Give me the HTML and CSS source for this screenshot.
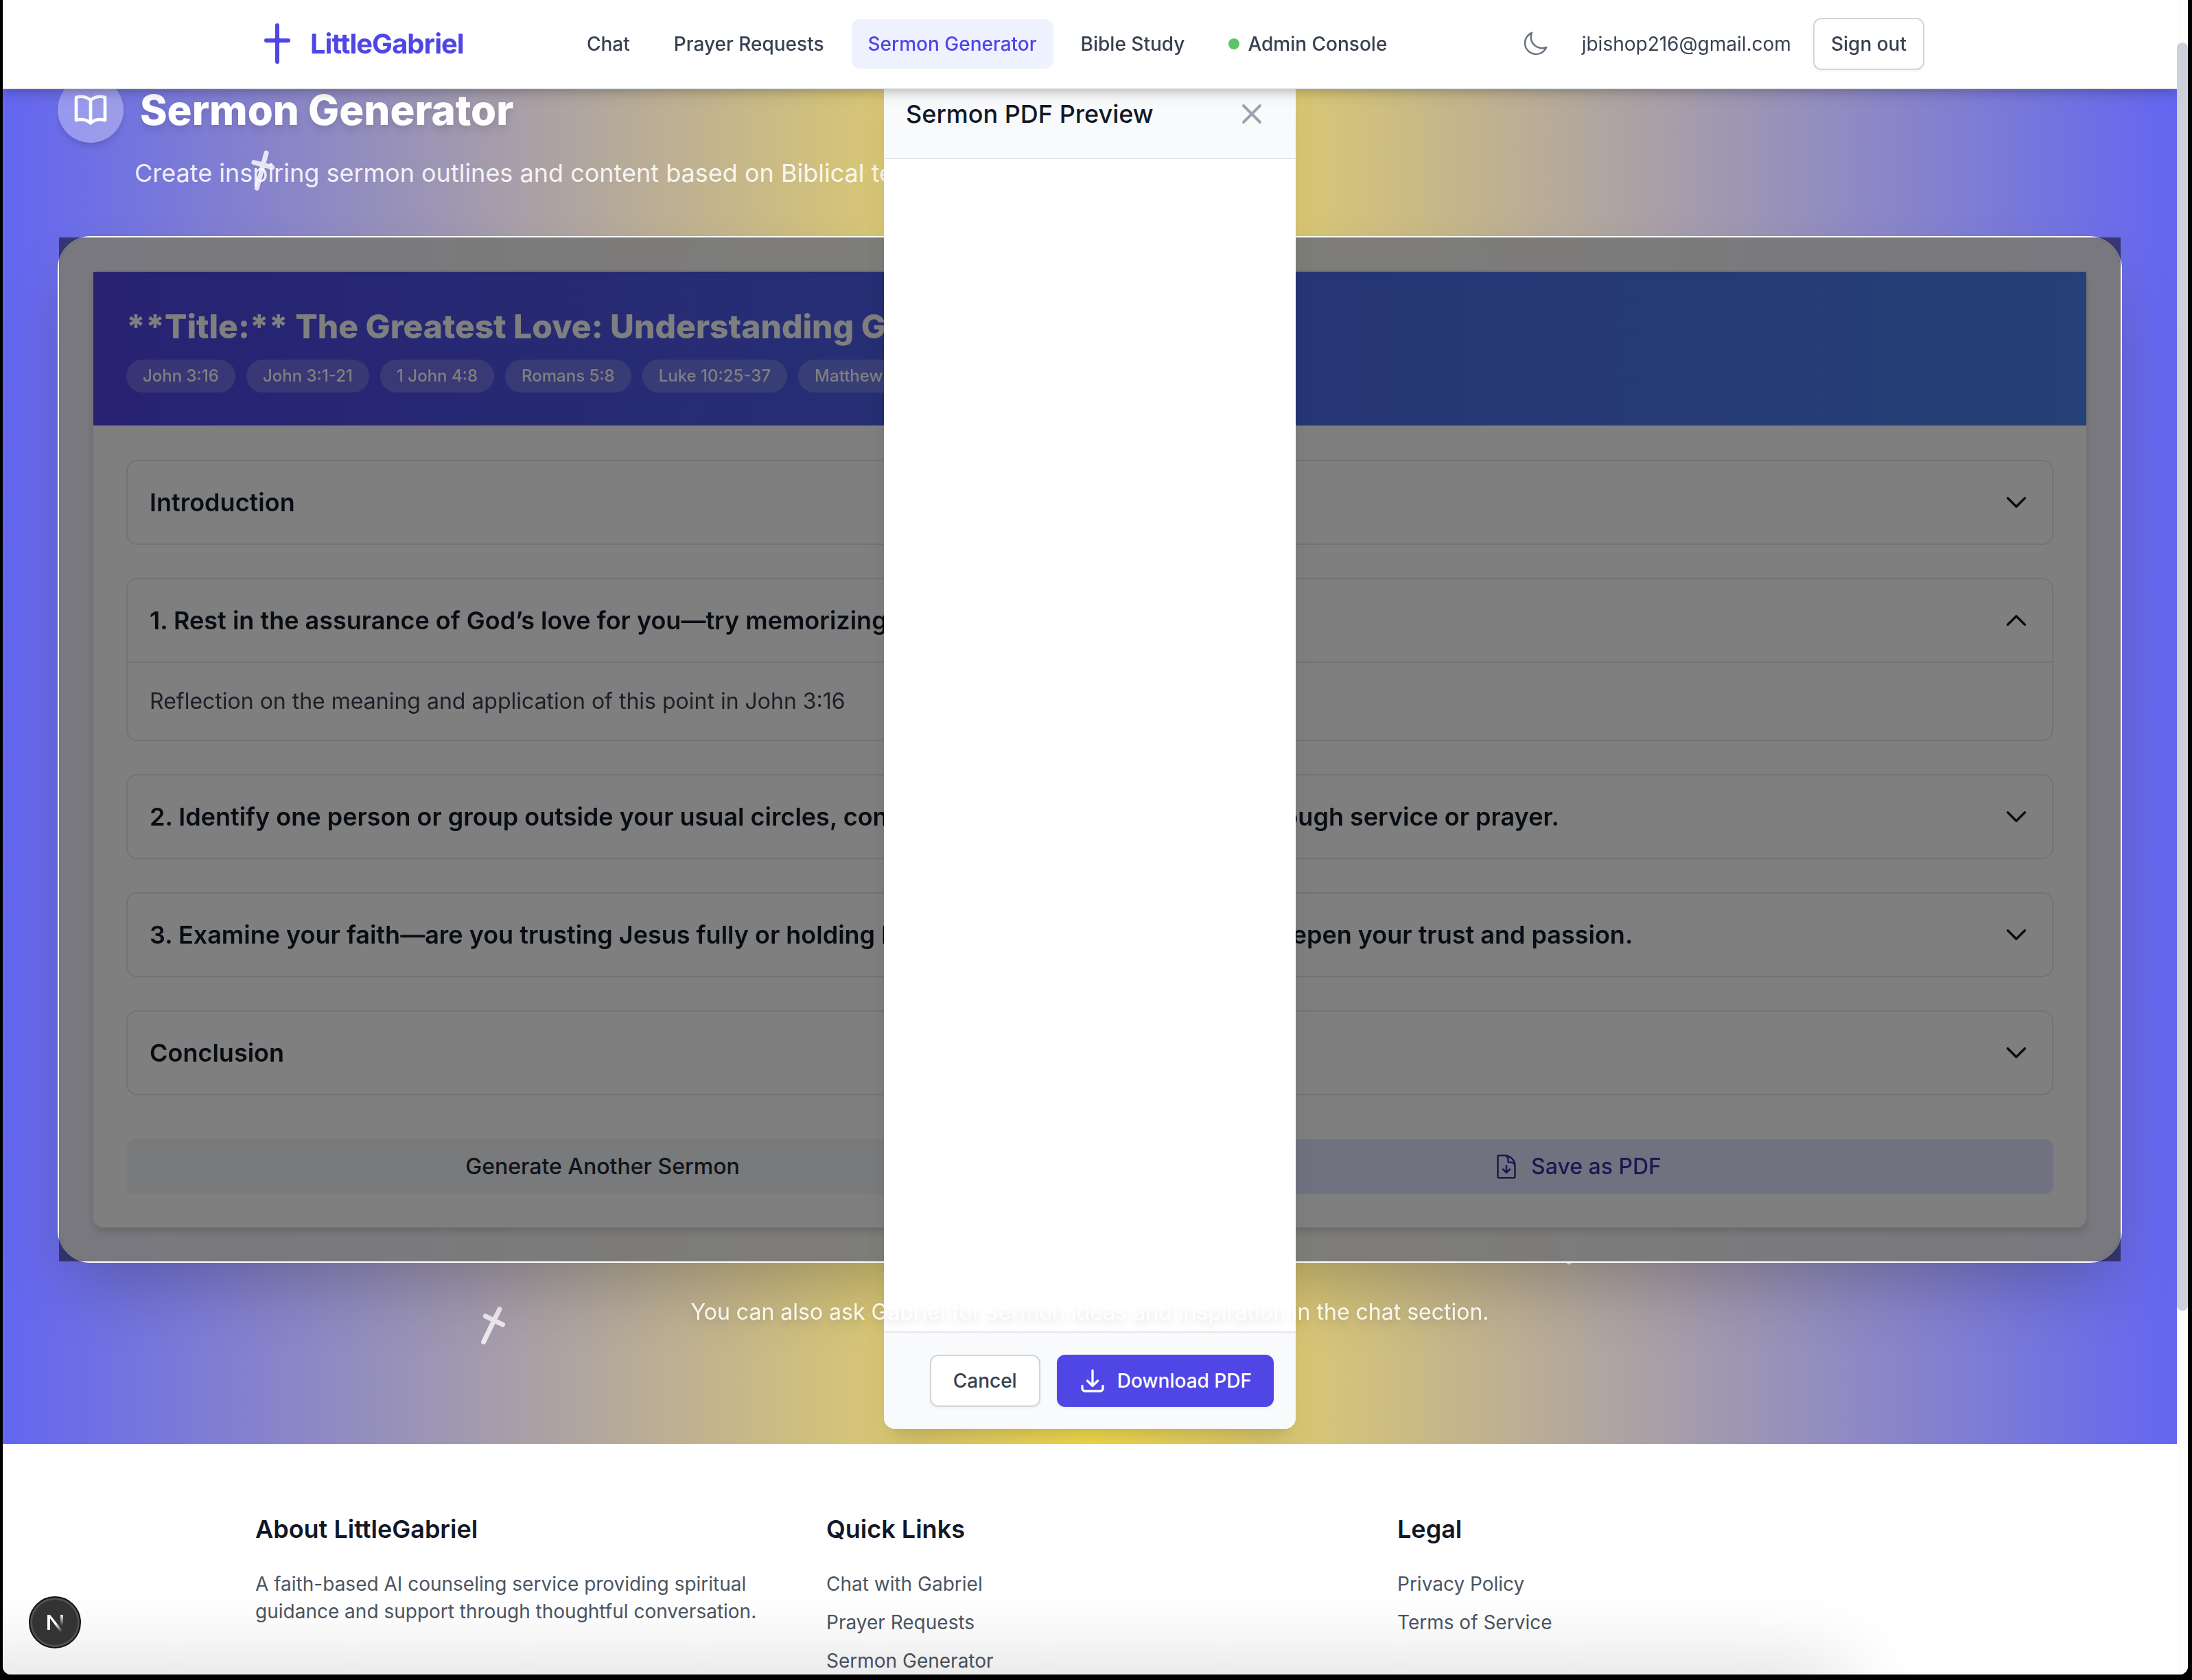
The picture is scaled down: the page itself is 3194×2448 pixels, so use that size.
FILE: index.html
```html
<!DOCTYPE html>
<html lang="en">
<head>
<meta charset="utf-8">
<title>Sermon Generator - LittleGabriel</title>
<link rel="stylesheet" href="styles.css">
</head>
<body>
<svg width="0" height="0" class="defs" aria-hidden="true">
  <symbol id="chevron-down" viewBox="0 0 24 24"><path d="M19.5 8.25l-7.5 7.5-7.5-7.5"/></symbol>
  <symbol id="chevron-up" viewBox="0 0 24 24"><path d="M4.5 15.75l7.5-7.5 7.5 7.5"/></symbol>
  <symbol id="cross" viewBox="0 0 64 64"><path d="M32 5v53M18 23h28"/></symbol>
</svg>
<div class="window">
  <div class="viewport">
    <header class="header">
      <div class="header-inner">
        <a class="brand" href="#">
          <svg class="brand-icon" viewBox="0 0 64 64" aria-hidden="true"><path d="M32 5v53M16 27h32"/><circle cx="32" cy="27" r="2"/></svg>
          <span class="brand-name">LittleGabriel</span>
        </a>
        <nav class="nav">
          <a class="nav-link" href="#">Chat</a>
          <a class="nav-link" href="#">Prayer Requests</a>
          <a class="nav-link is-active" href="#">Sermon Generator</a>
          <a class="nav-link" href="#">Bible Study</a>
          <a class="nav-link" href="#"><span class="status-dot"></span>Admin Console</a>
        </nav>
        <div class="account">
          <button class="theme-toggle" type="button" aria-label="Toggle theme">
            <svg class="icon thin" viewBox="0 0 24 24"><path d="M21.752 15.002A9.718 9.718 0 0118 15.75c-5.385 0-9.75-4.365-9.75-9.75 0-1.33.266-2.597.748-3.752A9.753 9.753 0 003 11.25C3 16.635 7.365 21 12.75 21a9.753 9.753 0 009.002-5.998z"/></svg>
          </button>
          <span class="email">jbishop216@gmail.com</span>
          <button class="btn btn-outline btn-compact" type="button">Sign out</button>
        </div>
      </div>
    </header>

    <main class="main">
      <svg class="float-cross cross-a" aria-hidden="true"><use href="#cross"/></svg>
      <svg class="float-cross cross-b" aria-hidden="true"><use href="#cross"/></svg>
      <svg class="float-cross cross-c" aria-hidden="true"><use href="#cross"/></svg>

      <div class="hero">
        <span class="hero-icon">
          <svg viewBox="0 0 24 24" aria-hidden="true"><path d="M12 6.042A8.967 8.967 0 006 3.75c-1.052 0-2.062.18-3 .512v14.25A8.987 8.987 0 016 18c2.305 0 4.408.867 6 2.292m0-14.25a8.966 8.966 0 016-2.292c1.052 0 2.062.18 3 .512v14.25A8.987 8.987 0 0018 18a8.967 8.967 0 00-6 2.292m0-14.25v14.25"/></svg>
        </span>
        <h1 class="hero-title">Sermon Generator</h1>
      </div>
      <p class="hero-sub">Create inspiring sermon outlines and content based on Biblical teachings</p>

      <div class="panel">
        <article class="sermon">
          <header class="sermon-head">
            <h2 class="sermon-title">**Title:** The Greatest Love: Understanding God’s Love in John 3:16</h2>
            <ul class="refs">
              <li class="ref">John 3:16</li>
              <li class="ref">John 3:1-21</li>
              <li class="ref">1 John 4:8</li>
              <li class="ref">Romans 5:8</li>
              <li class="ref">Luke 10:25-37</li>
              <li class="ref">Matthew 22:37</li>
            </ul>
          </header>
          <div class="sermon-body">
            <section class="section">
              <button class="section-toggle" type="button" aria-expanded="false">Introduction<svg class="icon"><use href="#chevron-down"/></svg></button>
            </section>
            <section class="section">
              <button class="section-toggle" type="button" aria-expanded="true">1. Rest in the assurance of God’s love for you—try memorizing John 3:16.<svg class="icon"><use href="#chevron-up"/></svg></button>
              <p class="section-text">Reflection on the meaning and application of this point in John 3:16</p>
            </section>
            <section class="section">
              <button class="section-toggle" type="button" aria-expanded="false">2. Identify one person or group outside your usual circles, consider how you may share care through service or prayer.<svg class="icon"><use href="#chevron-down"/></svg></button>
            </section>
            <section class="section">
              <button class="section-toggle" type="button" aria-expanded="false">3. Examine your faith—are you trusting Jesus fully or holding back? Look to God every day to deepen your trust and passion.<svg class="icon"><use href="#chevron-down"/></svg></button>
            </section>
            <section class="section">
              <button class="section-toggle" type="button" aria-expanded="false">Conclusion<svg class="icon"><use href="#chevron-down"/></svg></button>
            </section>
            <div class="actions">
              <button class="action" type="button">Generate Another Sermon</button>
              <button class="action action-pdf" type="button"><svg class="icon thin" viewBox="0 0 24 24"><path d="M19.5 14.25v-2.625a3.375 3.375 0 00-3.375-3.375h-1.5A1.125 1.125 0 0113.5 7.125v-1.5a3.375 3.375 0 00-3.375-3.375H8.25m.75 12l3 3m0 0l3-3m-3 3v-6m-1.5-9H5.625c-.621 0-1.125.504-1.125 1.125v17.25c0 .621.504 1.125 1.125 1.125h12.75c.621 0 1.125-.504 1.125-1.125V11.25a9 9 0 00-9-9z"/></svg>Save as PDF</button>
            </div>
          </div>
        </article>

        <div class="overlay">
          <div class="modal" role="dialog" aria-labelledby="modal-title">
            <div class="modal-head">
              <h3 class="modal-title" id="modal-title">Sermon PDF Preview</h3>
              <button class="modal-close" type="button" aria-label="Close"><svg viewBox="0 0 24 24"><path d="M6 18L18 6M6 6l12 12"/></svg></button>
            </div>
            <div class="modal-body"></div>
            <div class="modal-foot">
              <button class="btn btn-outline" type="button">Cancel</button>
              <button class="btn btn-primary" type="button"><svg class="icon" viewBox="0 0 24 24"><path d="M3 16.5v2.25A2.25 2.25 0 005.25 21h13.5A2.25 2.25 0 0021 18.75V16.5M16.5 12L12 16.5m0 0L7.5 12m4.5 4.5V3"/></svg>Download PDF</button>
            </div>
          </div>
        </div>
      </div>

      <p class="note">You can also ask Gabriel for sermon ideas and inspiration in the chat section.</p>
    </main>

    <footer class="footer">
      <div class="footer-inner">
        <div>
          <h3 class="footer-title">About LittleGabriel</h3>
          <p class="footer-text">A faith-based AI counseling service providing spiritual guidance and support through thoughtful conversation.</p>
        </div>
        <div>
          <h3 class="footer-title">Quick Links</h3>
          <ul class="footer-links">
            <li><a href="#">Chat with Gabriel</a></li>
            <li><a href="#">Prayer Requests</a></li>
            <li><a href="#">Sermon Generator</a></li>
          </ul>
        </div>
        <div>
          <h3 class="footer-title">Legal</h3>
          <ul class="footer-links">
            <li><a href="#">Privacy Policy</a></li>
            <li><a href="#">Terms of Service</a></li>
          </ul>
        </div>
      </div>
    </footer>

    <div class="scrim"></div>
    <button class="dev-badge" type="button" aria-label="Open dev tools">
      <svg viewBox="0 0 40 40">
        <defs>
          <linearGradient id="fade-diagonal" gradientUnits="userSpaceOnUse" x1="22" y1="21" x2="31" y2="33"><stop offset="0" stop-color="#fff"/><stop offset="1" stop-color="#fff" stop-opacity="0"/></linearGradient>
          <linearGradient id="fade-down" gradientUnits="userSpaceOnUse" x1="0" y1="8" x2="0" y2="25"><stop offset="0" stop-color="#fff"/><stop offset="1" stop-color="#fff" stop-opacity="0"/></linearGradient>
        </defs>
        <path d="M9 31V9h4L32 33l-3 3L13 14v17z" fill="url(#fade-diagonal)"/>
        <path d="M28 9h4v16h-4z" fill="url(#fade-down)"/>
      </svg>
    </button>
  </div>
  <div class="scrollbar"><div class="scroll-thumb"></div></div>
</div>
</body>
</html>
```
FILE: styles.css
```css
* { box-sizing: border-box; margin: 0; padding: 0; }

body {
  height: 100vh;
  padding: 0 6px 8px 4px;
  overflow: hidden;
  background: #000;
  color: #111827;
  font-family: Inter, "Liberation Sans", sans-serif;
}

button { font: inherit; color: inherit; background: none; border: 0; text-align: left; }
a { color: inherit; text-decoration: none; }
ul { list-style: none; }
svg { fill: none; stroke: currentColor; stroke-linecap: round; stroke-linejoin: round; flex: none; }
.defs { position: absolute; }

.icon { width: 40px; height: 40px; stroke-width: 2; }
.icon.thin { stroke-width: 1.5; }

.window {
  display: flex;
  height: 100%;
  overflow: hidden;
  border-radius: 0 0 12px 12px;
  background: #fff;
}
.viewport { position: relative; flex: 1; min-width: 0; overflow: hidden; }

.scrollbar { width: 16px; padding-top: 62px; background: #fcfcfc; }
.scroll-thumb { height: 1848px; border-radius: 8px; background: #cdd0d9; }

/* Header */
.header {
  position: absolute;
  inset: 0 0 auto;
  z-index: 10;
  background: #fff;
  border-bottom: 2px solid #e5e7eb;
  box-shadow: 0 8px 12px -2px rgba(0, 0, 0, .1), 0 4px 8px -4px rgba(0, 0, 0, .1), 0 8px 20px rgba(0, 0, 0, .1);
}
.header-inner {
  display: flex;
  justify-content: space-between;
  align-items: center;
  max-width: 2560px;
  height: 128px;
  margin: 0 auto;
  padding: 0 64px;
}
.brand { display: flex; align-items: center; gap: 16px; color: #4f46e5; }
.brand-icon { width: 64px; height: 64px; stroke-width: 6; }
.brand-name { font-size: 40px; line-height: 56px; font-weight: 700; letter-spacing: -1px; }
.nav { display: flex; gap: 16px; }
.nav-link {
  display: flex;
  align-items: center;
  padding: 16px 24px;
  border-radius: 12px;
  font-size: 28px;
  line-height: 40px;
  font-weight: 500;
  color: #374151;
}
.nav-link.is-active { background: #eef2ff; color: #4f46e5; }
.status-dot { width: 16px; height: 16px; margin-right: 12px; border-radius: 50%; background: #5bc466; }
.account { display: flex; align-items: center; gap: 32px; font-size: 28px; line-height: 40px; color: #374151; }
.theme-toggle { display: flex; padding: 16px; color: #6b7280; }

.btn {
  display: flex;
  align-items: center;
  gap: 16px;
  padding: 16px 32px;
  border: 2px solid transparent;
  border-radius: 12px;
  font-size: 28px;
  line-height: 40px;
  font-weight: 500;
  box-shadow: 0 2px 4px rgba(0, 0, 0, .05);
}
.btn-compact { padding: 16px 24px; }
.btn-outline { border-color: #d1d5db; background: #fff; color: #374151; }
.btn-primary { padding: 16px 30px; background: #4f46e5; color: #fff; }

/* Main area */
.main {
  position: relative;
  padding: 112px 80px 168px;
  background: linear-gradient(90deg, #6366f1, #d8c676 40%, #f7df4c 50%, #d8c676 60%, #6366f1);
}
.float-cross { position: absolute; width: 64px; height: 64px; stroke-width: 7; color: #fff; opacity: .8; }
.cross-a { left: 345px; top: 217px; transform: rotate(15deg); }
.cross-b { left: 680px; top: 1900px; transform: rotate(26deg); }
.cross-c { left: 2250px; top: 1781px; }

.hero { display: flex; align-items: center; gap: 24px; color: #fff; }
.hero-icon {
  display: grid;
  place-items: center;
  width: 96px;
  height: 96px;
  border-radius: 50%;
  background: rgba(255, 255, 255, .3);
  box-shadow: 0 8px 12px -2px rgba(0, 0, 0, .1), 0 4px 8px -4px rgba(0, 0, 0, .1);
}
.hero-icon svg { width: 56px; height: 56px; stroke-width: 2; }
.hero-title { font-size: 60px; line-height: 72px; font-weight: 800; filter: drop-shadow(0 8px 6px rgba(0, 0, 0, .07)) drop-shadow(0 4px 4px rgba(0, 0, 0, .06)); }
.hero-sub { position: relative; margin: 16px 0 64px 112px; font-size: 36px; line-height: 56px; color: rgba(255, 255, 255, .9); }

.panel {
  position: relative;
  z-index: 1;
  padding: 48px;
  border: 2px solid #fff;
  border-radius: 48px;
  background: linear-gradient(rgba(255, 255, 255, .9), rgba(255, 255, 255, .9)) padding-box;
  backdrop-filter: blur(8px);
  box-shadow: 0 50px 100px -24px rgba(0, 0, 0, .25);
}
.sermon {
  border: 2px solid #e5e7eb;
  border-radius: 16px;
  background: #fff;
  box-shadow: 0 8px 12px -2px rgba(0, 0, 0, .1), 0 4px 8px -4px rgba(0, 0, 0, .1);
}
.sermon-head { padding: 48px; background: linear-gradient(90deg, #4f46e5, #4b82ee); color: #fff; }
.sermon-title { font-size: 48px; line-height: 64px; font-weight: 800; }
.refs { display: flex; gap: 16px; margin-top: 16px; }
.ref { padding: 8px 24px; border-radius: 24px; background: rgba(255, 255, 255, .2); font-size: 24px; line-height: 32px; font-weight: 500; }

.sermon-body { display: grid; gap: 48px; padding: 50px 48px 48px; }
.section { border: 2px solid #e5e7eb; border-radius: 16px; }
.section-toggle {
  display: flex;
  justify-content: space-between;
  align-items: center;
  width: 100%;
  padding: 32px;
  font-size: 36px;
  line-height: 56px;
  font-weight: 600;
}
.section-text { padding: 32px; border-top: 2px solid #e5e7eb; font-size: 32px; line-height: 48px; color: #374151; }

.actions { display: grid; grid-template-columns: 1fr 1fr; gap: 32px; margin-top: 16px; }
.action {
  display: flex;
  justify-content: center;
  align-items: center;
  gap: 16px;
  padding: 16px;
  border-radius: 12px;
  background: #f3f4f6;
  font-size: 32px;
  line-height: 48px;
  font-weight: 500;
  color: #1f2937;
}
.action-pdf { background: #e0e7ff; color: #3730a3; }

/* Dialog */
.overlay {
  position: absolute;
  inset: 0;
  display: flex;
  justify-content: center;
  align-items: center;
  background: rgba(0, 0, 0, .5);
}
.modal {
  display: flex;
  flex-direction: column;
  flex: none;
  width: 600px;
  height: 1980px;
  overflow: hidden;
  border-radius: 16px;
  background: #fff;
  box-shadow: 0 40px 50px -10px rgba(0, 0, 0, .1), 0 16px 20px -12px rgba(0, 0, 0, .1);
}
.modal-head {
  display: flex;
  justify-content: space-between;
  align-items: center;
  padding: 32px;
  border-bottom: 2px solid #e5e7eb;
  background: #f9fafb;
}
.modal-title { font-size: 36px; line-height: 56px; font-weight: 500; }
.modal-close { display: flex; padding: 8px; color: #9ca3af; }
.modal-close svg { width: 48px; height: 48px; stroke-width: 2; }
.modal-body { flex: 1; }
.modal-foot {
  display: flex;
  justify-content: flex-end;
  gap: 24px;
  padding: 32px;
  border-top: 2px solid #e5e7eb;
  background: #f9fafb;
}

.note {
  position: relative;
  z-index: 2;
  margin-top: 48px;
  text-align: center;
  font-size: 32px;
  line-height: 48px;
  color: rgba(255, 255, 255, .9);
  filter: drop-shadow(0 8px 6px rgba(0, 0, 0, .07)) drop-shadow(0 4px 4px rgba(0, 0, 0, .06));
}

/* Footer */
.footer { position: relative; z-index: 3; background: #fff; }
.footer-inner {
  display: grid;
  grid-template-columns: repeat(3, 1fr);
  gap: 64px;
  max-width: 2560px;
  margin: 0 auto;
  padding: 96px 64px;
}
.footer-title { margin-bottom: 32px; font-size: 36px; line-height: 56px; font-weight: 600; }
.footer-text, .footer-links { font-size: 28px; line-height: 40px; color: #4b5563; }
.footer-links { display: grid; gap: 16px; }

.scrim {
  position: absolute;
  z-index: 4;
  left: -100px;
  right: 500px;
  bottom: -60px;
  height: 50px;
  box-shadow: 0 0 120px 20px rgba(0, 0, 0, .16);
}
.dev-badge {
  position: absolute;
  z-index: 5;
  left: 38px;
  bottom: 38px;
  display: grid;
  place-items: center;
  width: 76px;
  height: 76px;
  border: 2px solid #111;
  border-radius: 50%;
  background: #333;
  box-shadow: inset 0 0 0 3px #505050;
}
.dev-badge svg { width: 40px; height: 40px; stroke: none; }
```
